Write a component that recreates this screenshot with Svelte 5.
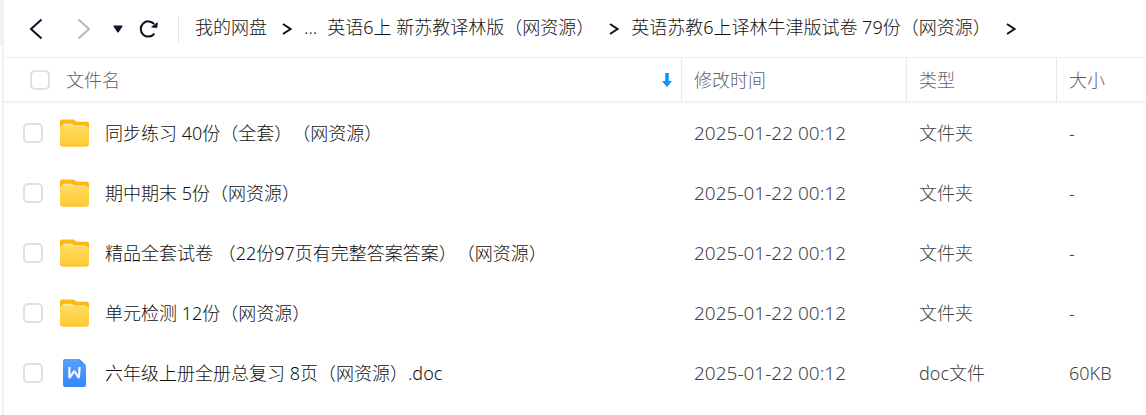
<script>
  let crumbs = ['我的网盘', '英语6上 新苏教译林版（网资源）', '英语苏教6上译林牛津版试卷 79份（网资源）'];

  let files = [
    { name: '同步练习 40份（全套）（网资源）', time: '2025-01-22 00:12', type: '文件夹', size: '-', folder: true },
    { name: '期中期末 5份（网资源）', time: '2025-01-22 00:12', type: '文件夹', size: '-', folder: true },
    { name: '精品全套试卷 （22份97页有完整答案答案）（网资源）', time: '2025-01-22 00:12', type: '文件夹', size: '-', folder: true },
    { name: '单元检测 12份（网资源）', time: '2025-01-22 00:12', type: '文件夹', size: '-', folder: true },
    { name: '六年级上册全册总复习 8页（网资源）.doc', time: '2025-01-22 00:12', type: 'doc文件', size: '60KB', folder: false }
  ];

  let selected = files.map(() => false);
  $: allSelected = selected.every((s) => s);

  const toggleAll = () => {
    const next = !allSelected;
    selected = selected.map(() => next);
  }
</script>

{#snippet chevron()}
  <svg class="chevron" width="10" height="12" viewBox="0 0 10 12" aria-hidden="true">
    <path d="M1 1 L8.5 6 L1 11" fill="none" stroke="#0b1023" stroke-width="2" />
  </svg>
{/snippet}

<div class="page">
  <div class="rail"></div>
  <main>
    <div class="toolbar">
      <button class="back" aria-label="后退">
        <svg width="14" height="22" viewBox="0 0 14 22">
          <path d="M12.5 1.5 L2 11 L12.5 20.5" fill="none" stroke="#0b1023" stroke-width="2" />
        </svg>
      </button>
      <button class="forward" aria-label="前进">
        <svg width="14" height="22" viewBox="0 0 14 22">
          <path d="M1.5 1.5 L12 11 L1.5 20.5" fill="none" stroke="#b5b5b5" stroke-width="2" />
        </svg>
      </button>
      <button class="history" aria-label="历史">
        <svg width="10" height="8" viewBox="0 0 10 8">
          <path d="M1 0.5 H9 Q10 0.7 9.4 1.6 L5.8 7 Q5 8 4.2 7 L0.6 1.6 Q0 0.7 1 0.5 Z" fill="#0b1023" />
        </svg>
      </button>
      <button class="refresh" aria-label="刷新">
        <svg width="20" height="18" viewBox="0 0 20 18">
          <path d="M15.2 4.1 A7.6 7.6 0 1 0 15.4 13.6" fill="none" stroke="#0b1023" stroke-width="2" />
          <path d="M18.4 2.8 L17.8 7.6 L12.6 7 Z" fill="#0b1023" stroke="#0b1023" stroke-width="0.8" stroke-linejoin="round" />
        </svg>
      </button>
      <nav>
        {#each crumbs as crumb, i}
          <a href="#/{i}">{crumb}</a>
          {@render chevron()}
          {#if i === 0}
            <button class="more">...</button>
          {/if}
        {/each}
      </nav>
    </div>

    <table>
      <colgroup>
        <col />
        <col class="col-time" />
        <col class="col-type" />
        <col class="col-size" />
      </colgroup>
      <thead>
        <tr>
          <th>
            <div class="name-head">
              <input type="checkbox" aria-label="全选" checked={allSelected} on:change={toggleAll} />
              <span>文件名</span>
              <svg width="10" height="14" viewBox="0 0 10 14" aria-hidden="true">
                <path d="M3.2 0 H6.8 V8 H10 L5.6 13.4 Q5 14 4.4 13.4 L0 8 H3.2 Z" fill="#0a95ff" />
              </svg>
            </div>
          </th>
          <th>修改时间</th>
          <th>类型</th>
          <th>大小</th>
        </tr>
      </thead>
      <tbody>
        {#each files as file, i}
          <tr>
            <td>
              <div class="name">
                <input type="checkbox" id="file-{i}" bind:checked={selected[i]} />
                {#if file.folder}
                  <svg width="29" height="28" viewBox="0 0 29 28" aria-hidden="true">
                    <defs>
                      <linearGradient id="folder-{i}" x1="0" y1="0" x2="0" y2="1">
                        <stop offset="0" stop-color="#ffdc62" />
                        <stop offset="1" stop-color="#ffc933" />
                      </linearGradient>
                    </defs>
                    <path d="M0 2.5 Q0 0.5 2 0.5 H13 Q14 0.5 15 1.5 L17 2.8 H27 Q29 2.8 29 5 V16 H0 Z" fill="#fdb813" />
                    <path d="M2.5 9 V6.5 Q2.5 4.8 4.5 4.8 H10.5 Q12 4.8 13 5.8 L14 6.6 H25 Q26.6 6.6 26.6 8.2 V10 H2.5 Z" fill="#ffe9b0" />
                    <path d="M0 10 Q0 6.5 3 6.5 H11 Q12.5 6.5 13.5 7 Q14.5 7.6 16 7.6 H26 Q29 7.6 29 10.5 V24.5 Q29 27.5 26 27.5 H3 Q0 27.5 0 24.5 Z" fill="url(#folder-{i})" />
                    <path d="M0.5 24.8 Q0.8 27 3 27 H26 Q28.2 27 28.5 24.8" fill="none" stroke="#ffbd24" stroke-width="1" />
                  </svg>
                {:else}
                  <svg width="29" height="30" viewBox="0 0 29 30" aria-hidden="true">
                    <defs>
                      <linearGradient id="doc-{i}" x1="0" y1="0" x2="0" y2="1">
                        <stop offset="0" stop-color="#5aa0ff" />
                        <stop offset="1" stop-color="#3687f8" />
                      </linearGradient>
                    </defs>
                    <path d="M5 1 H19.5 L26 7.5 V27 Q26 29 24 29 H5 Q3 29 3 27 V3 Q3 1 5 1 Z" fill="url(#doc-{i})" />
                    <path d="M19.5 1 L26 7.5 H22 Q19.5 7.5 19.5 5 Z" fill="#4a93f8" />
                    <path d="M9.4 9 V20 L14.4 13 L18.8 20 L19.6 9" fill="none" stroke="#f1f7ff" stroke-width="2.2" stroke-linejoin="bevel" />
                  </svg>
                {/if}
                <label for="file-{i}">{file.name}</label>
              </div>
            </td>
            <td class="time">{file.time}</td>
            <td>{file.type}</td>
            <td>{file.size}</td>
          </tr>
        {/each}
      </tbody>
    </table>
  </main>
</div>

<style>
  :global(body) {
    background: #fff;
  }

  .page {
    display: flex;
    min-height: 100vh;
    font-family: "Noto Sans", "Noto Sans CJK SC", sans-serif;
    font-size: 18px;
    font-weight: 300;
    line-height: 24px;
    text-spacing-trim: space-all;
    white-space: nowrap;
    color: #111;
  }

  .rail {
    flex: none;
    width: 2px;
    border-right: 2px solid #f0f0f2;
    background: linear-gradient(#eaf4fb 46px, #fff 46px);
  }

  main {
    flex: 1;
    min-width: 0;
    overflow: hidden;
  }

  .toolbar {
    display: flex;
    align-items: center;
    height: 57px;
    border-bottom: 1px solid #ededed;
    padding-left: 25px;
  }

  button {
    display: flex;
    padding: 0;
    border: none;
    background: none;
    color: inherit;
    font: inherit;
    cursor: pointer;
  }

  .back {
    margin-right: 34px;
  }

  .forward {
    margin-right: 22px;
  }

  .history {
    margin-right: 16px;
  }

  .refresh {
    margin-right: 19px;
  }

  nav {
    display: flex;
    align-items: center;
    height: 26px;
    padding-left: 16px;
    border-left: 1px solid #e3e3e6;
  }

  nav a,
  .more {
    padding-bottom: 4px;
  }

  nav a {
    color: inherit;
    text-decoration: none;
  }

  .chevron {
    flex: none;
    margin: 0 12px 0 15px;
  }

  .more {
    margin-right: 10px;
  }

  table {
    width: 100%;
    table-layout: fixed;
    border-collapse: separate;
    border-spacing: 0;
  }

  .col-time {
    width: 225px;
  }

  .col-type {
    width: 150px;
  }

  .col-size {
    width: 90px;
  }

  th,
  td {
    padding: 0 0 0 13px;
    text-align: left;
    font-weight: inherit;
  }

  th {
    height: 43px;
    border-bottom: 2px solid #f3f3f4;
    color: #5f636e;
  }

  th + th {
    padding-left: 12px;
    border-left: 1px solid #e8e8ea;
  }

  th:first-child,
  td:first-child {
    padding-left: 0;
  }

  td {
    height: 60px;
    color: #444;
  }

  .time {
    font-size: 19px;
  }

  .name-head,
  .name {
    display: flex;
    align-items: center;
  }

  .name-head {
    padding: 0 9px 0 26px;
    gap: 16px;
  }

  .name-head svg {
    margin-left: auto;
  }

  .name {
    padding-left: 19px;
    gap: 16px;
    color: #111;
  }

  .name input {
    margin-right: 1px;
  }

  .name svg {
    flex: none;
  }

  input {
    appearance: none;
    flex: none;
    width: 20px;
    height: 20px;
    margin: 0;
    border: 2px solid #e0e0e0;
    border-radius: 5px;
    background: #fff;
  }

  input:checked {
    border-color: #0a95ff;
    background: #0a95ff;
  }
</style>
